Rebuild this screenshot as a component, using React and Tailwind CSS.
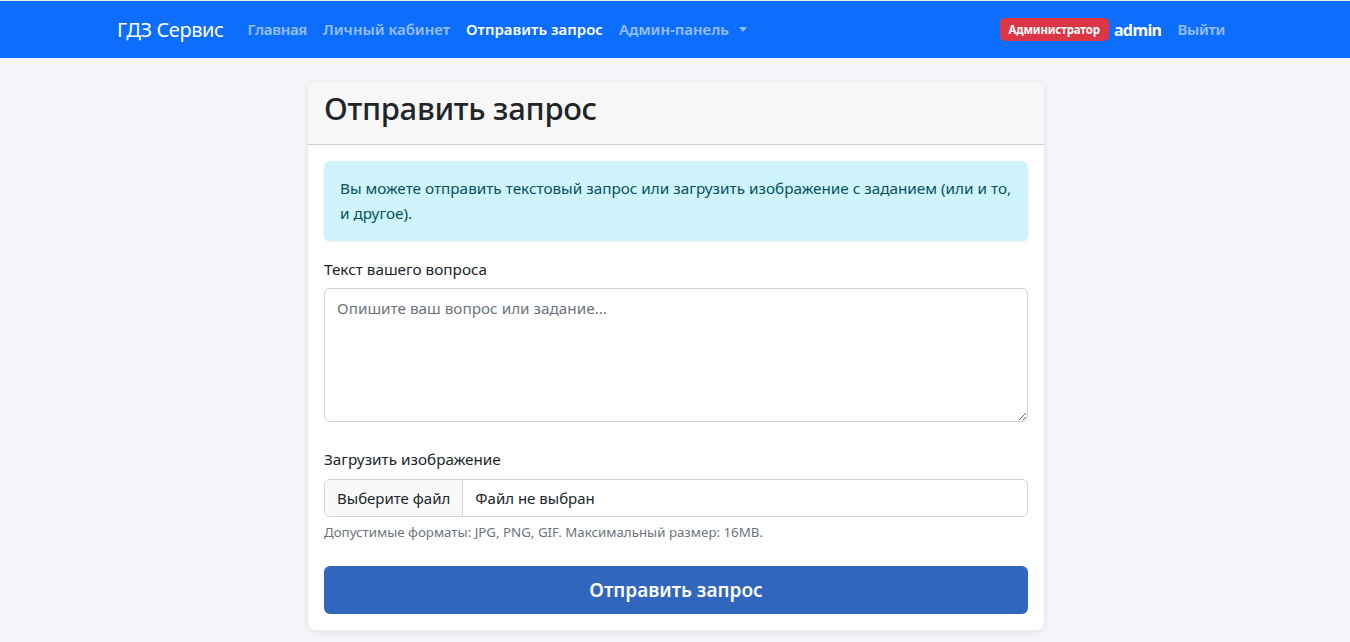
import React from 'react';

const font = { fontFamily: '"Noto Sans", "Open Sans", sans-serif' };

export default function App() {
  return (
    <div className="min-h-screen bg-[#f4f5f9] text-[#212529]" style={font}>
      {/* навбар */}
      <nav className="h-[58px] bg-[#0d6efd] border-t border-[#eef0f6]">
        <div className="mx-auto flex h-full max-w-[1140px] items-center px-3">
          <span className="mr-4 text-[20px] text-white tracking-[-0.4px]">ГДЗ Сервис</span>
          <div className="flex items-center text-[15px] font-semibold">
            <a className="px-2 text-white/55 tracking-[-0.3px]">Главная</a>
            <a className="px-2 text-white/55">Личный кабинет</a>
            <a className="px-2 text-white">Отправить запрос</a>
            <a className="flex items-center px-2 text-white/55">
              Админ-панель
              <span className="ml-[10px] inline-block h-0 w-0 border-x-[4px] border-t-[5px] border-x-transparent border-t-white/55"></span>
            </a>
          </div>
          <div className="ml-auto flex items-center">
            <span className="rounded-[5px] bg-[#dc3545] px-[9px] py-[5px] text-[11.5px] font-bold leading-[13px] tracking-[-0.2px] text-white">Администратор</span>
            <span className="ml-[5px] text-[16px] font-bold tracking-[-0.6px] text-white">admin</span>
            <a className="ml-[8px] px-2 text-[15px] font-semibold tracking-[-0.3px] text-white/55">Выйти</a>
          </div>
        </div>
      </nav>

      <main className="flex justify-center pt-6 pb-3">
        <div className="w-[736px] translate-x-[1px] overflow-hidden rounded-lg bg-white shadow-[0_2px_8px_rgba(0,0,0,0.08)]">
          <div className="h-[63px] border-b border-[#cfcfcf] bg-[#f7f7f7] px-4 pt-[8px]">
            <h2 className="text-[31px] font-medium leading-[1.2] tracking-[-0.3px]">Отправить запрос</h2>
          </div>

          <div className="px-4 pt-4 pb-4">
            <div className="rounded-md bg-[#cff4fc] px-4 py-[15px] text-[15.3px] leading-[25px] text-[#055160] shadow-[0_1px_3px_rgba(0,0,0,0.08)]">
              Вы можете отправить текстовый запрос или загрузить изображение с заданием (или и то, и другое).
            </div>

            <label className="mt-[16px] mb-[7px] block text-[15.3px] leading-6">Текст вашего вопроса</label>
            <textarea
              rows={5}
              placeholder="Опишите ваш вопрос или задание..."
              className="block h-[134px] w-full resize-y rounded-md border border-[#ced4da] px-3 py-[7px] text-[15.3px] leading-6 placeholder:text-[#6c757d]"
            />

            <label className="mt-[25px] mb-[8px] block text-[15.3px] leading-6">Загрузить изображение</label>
            <div className="flex h-[38px] items-center overflow-hidden rounded-md border border-[#ced4da] text-[15px]">
              <span className="flex h-full items-center border-r border-[#ced4da] bg-[#f8f9fa] px-3">Выберите файл</span>
              <span className="px-3">Файл не выбран</span>
            </div>
            <div className="mt-[5px] text-[13.3px] leading-5 text-[#6c757d]">
              Допустимые форматы: JPG, PNG, GIF. Максимальный размер: 16MB.
            </div>

            <button className="mt-[24px] h-[48px] w-full rounded-md bg-[#3067bd] text-[19px] font-semibold text-white">
              Отправить запрос
            </button>
          </div>
        </div>
      </main>
    </div>
  );
}
